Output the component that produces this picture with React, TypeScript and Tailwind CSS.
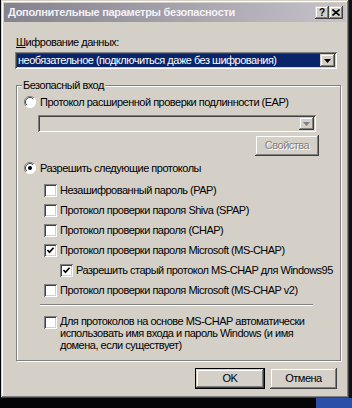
import React from "react";

const RAISED =
  "shadow-[inset_-1px_-1px_0_#404040,inset_1px_1px_0_#d4d0c8,inset_-2px_-2px_0_#808080,inset_2px_2px_0_#ffffff]";
const SUNKEN =
  "shadow-[inset_1px_1px_0_#808080,inset_-1px_-1px_0_#ffffff,inset_2px_2px_0_#404040,inset_-2px_-2px_0_#d4d0c8]";

const Arrow = ({ color = "#000" }: { color?: string }) => (
  <svg width="7" height="4" viewBox="0 0 7 4">
    <path d="M0 0h7L3.5 4z" fill={color} />
  </svg>
);

const Checkbox = ({ checked }: { checked?: boolean }) => (
  <span className={`w-[13px] h-[13px] shrink-0 bg-white flex items-center justify-center ${SUNKEN}`}>
    {checked && (
      <svg width="9" height="9" viewBox="0 0 9 9">
        <polyline points="1.5,4 3.5,6.2 7.5,1.8" fill="none" stroke="#000" strokeWidth="1.7" />
      </svg>
    )}
  </span>
);

const Radio = ({ checked }: { checked?: boolean }) => (
  <svg width="12" height="12" viewBox="0 0 12 12" className="shrink-0">
    <circle cx="6" cy="6" r="5.5" fill="#ffffff" />
    <path d="M10 2A5.5 5.5 0 0 0 2 10" fill="none" stroke="#808080" strokeWidth="1" />
    <path d="M2 10A5.5 5.5 0 0 0 10 2" fill="none" stroke="#ffffff" strokeWidth="1" />
    <path d="M9.2 2.8A4.5 4.5 0 0 0 2.8 9.2" fill="none" stroke="#404040" strokeWidth="1" />
    {checked && <circle cx="6" cy="6" r="2" fill="#000" />}
  </svg>
);

const CheckRow = ({ label, checked, indent }: { label: string; checked?: boolean; indent?: boolean }) => (
  <div className={`h-[20px] flex items-center gap-[3px] ${indent ? "ml-[43px]" : "ml-[27px]"}`}>
    <Checkbox checked={checked} />
    <span className="whitespace-nowrap">{label}</span>
  </div>
);

export default function App() {
  return (
    <div className="w-[352px] h-[408px] bg-[#050508] flex flex-col overflow-hidden text-[11px] leading-[13px] tracking-[-0.5px] text-black [font-family:'Liberation_Sans',Arial,sans-serif]">
      <div className="flex h-[398px]">
        <div className="w-[1px]" />
        {/* Dialog */}
        <div className={`w-[348px] h-[398px] p-[3px] flex flex-col bg-[#d4d0c8] ${RAISED}`}>
          {/* Title bar */}
          <div className="h-[19px] flex items-center pl-[4px] pr-[3px] bg-gradient-to-r from-[#84828e] to-[#c6c2ca]">
            <span className="flex-1 font-bold text-[#f4f2f6] whitespace-nowrap tracking-[-0.3px]">Дополнительные параметры безопасности</span>
            <div className="flex tracking-normal">
              <div className={`w-[14px] h-[13px] bg-[#d4d0c8] flex items-center justify-center font-bold text-[10px] ${RAISED}`}>?</div>
              <div className={`w-[14px] h-[13px] bg-[#d4d0c8] flex items-center justify-center ${RAISED}`}>
                <svg width="8" height="7" viewBox="0 0 8 7">
                  <path d="M0.5 0.5L7.5 6.5M7.5 0.5L0.5 6.5" stroke="#000" strokeWidth="1.6" />
                </svg>
              </div>
            </div>
          </div>

          {/* Encryption label */}
          <div className="mt-[14px] ml-[12px] h-[13px]">
            <span className="underline">Ш</span>ифрование данных:
          </div>

          {/* Encryption select */}
          <div className={`mt-[3px] ml-[11px] w-[322px] h-[17px] bg-white p-[2px] flex ${SUNKEN}`}>
            <div className="flex-1 bg-[#0a246a] text-white pl-[1px] flex items-center whitespace-nowrap">
              необязательное (подключиться даже без шифрования)
            </div>
            <div className={`w-[15px] bg-[#d4d0c8] flex items-center justify-center ${RAISED}`}>
              <Arrow />
            </div>
          </div>

          {/* Group box */}
          <div className="relative mt-[16px] ml-[12px] w-[325px] h-[276px] border border-[#808080] shadow-[inset_1px_1px_0_#ffffff,1px_1px_0_#ffffff] flex flex-col">
            <span className="absolute -top-[7px] left-[5px] px-[1px] bg-[#d4d0c8]">Безопасный вход</span>

            <div className="mt-[6px] ml-[7px] h-[20px] flex items-center gap-[4px]">
              <Radio />
              <span className="whitespace-nowrap">Протокол расширенной проверки подлинности (EAP)</span>
            </div>

            <div className={`mt-[3px] ml-[21px] w-[278px] h-[17px] bg-[#d4d0c8] p-[2px] flex justify-end ${SUNKEN}`}>
              <div className={`w-[15px] bg-[#d4d0c8] flex items-center justify-center ${RAISED}`}>
                <Arrow color="#808080" />
              </div>
            </div>

            <div className={`mt-[3px] ml-[238px] w-[64px] h-[21px] flex items-center justify-center text-[#808080] [text-shadow:1px_1px_0_#ffffff] ${RAISED}`}>
              Свойства
            </div>

            <div className="mt-[2px] ml-[7px] h-[20px] flex items-center gap-[4px]">
              <Radio checked />
              <span className="whitespace-nowrap">Разрешить следующие протоколы</span>
            </div>

            <div className="mt-[2px] flex flex-col">
              <CheckRow label="Незашифрованный пароль (PAP)" />
              <CheckRow label="Протокол проверки пароля Shiva (SPAP)" />
              <CheckRow label="Протокол проверки пароля (CHAP)" />
              <CheckRow label="Протокол проверки пароля Microsoft (MS-CHAP)" checked />
              <CheckRow label="Разрешить старый протокол MS-CHAP для Windows95" checked indent />
              <CheckRow label="Протокол проверки пароля Microsoft (MS-CHAP v2)" />
            </div>

            <div className="mt-[4px] ml-[23px] w-[273px] h-[2px] border-t border-t-[#808080] border-b border-b-white" />

            <div className="mt-[10px] ml-[27px] flex items-start gap-[3px]">
              <Checkbox />
              <span className="leading-[12px] -mt-[1px]">
                Для протоколов на основе MS-CHAP автоматически
                <br />
                использовать имя входа и пароль Windows (и имя
                <br />
                домена, если существует)
              </span>
            </div>
          </div>

          {/* Buttons */}
          <div className="mt-[7px] flex justify-end gap-[5px] pr-[9px]">
            <div className="w-[70px] h-[21px] border border-black">
              <div className={`w-full h-full flex items-center justify-center ${RAISED}`}>OK</div>
            </div>
            <div className={`w-[67px] h-[21px] flex items-center justify-center ${RAISED}`}>Отмена</div>
          </div>
        </div>
        <div className="flex-1 bg-[#101018]" />
      </div>
      <div className="flex-1 flex">
        <div className="flex-1" />
        <div className="w-[36px] bg-[#2a4fa8]" />
      </div>
    </div>
  );
}
